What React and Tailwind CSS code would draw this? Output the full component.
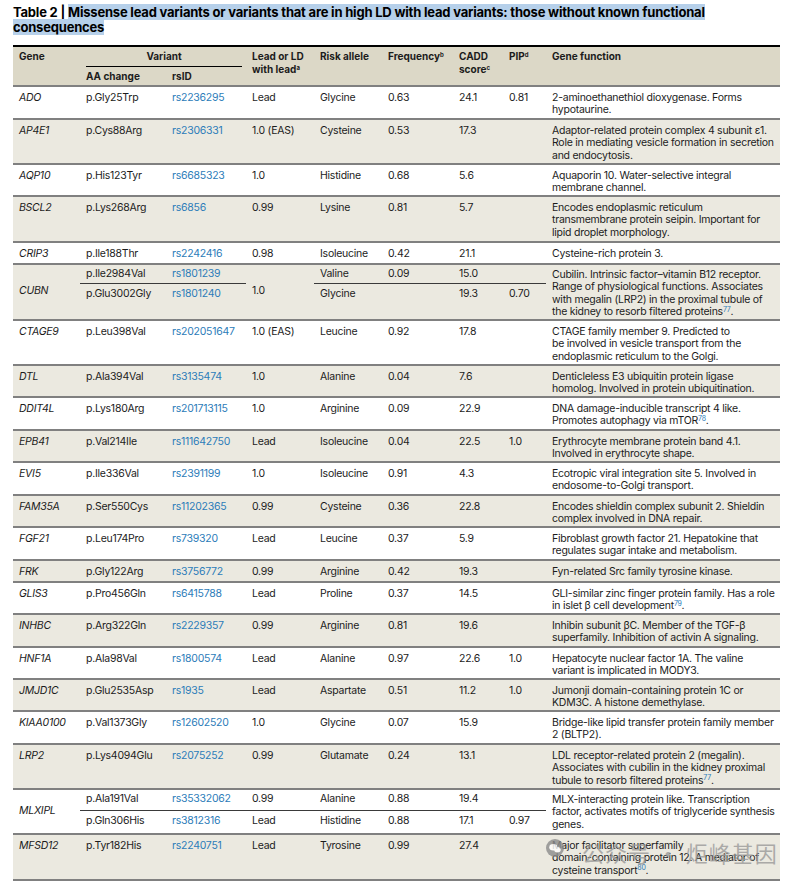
import React from "react";

const rsCls = "text-[#2c7cb9]";

const rows = [
  { gene: "ADO", aa: "p.Gly25Trp", rs: "rs2236295", lead: "Lead", allele: "Glycine", freq: "0.63", cadd: "24.1", pip: "0.81", fn: ["2-aminoethanethiol dioxygenase. Forms", "hypotaurine."], h: "h-[33px]" },
  { gene: "AP4E1", aa: "p.Cys88Arg", rs: "rs2306331", lead: "1.0 (EAS)", allele: "Cysteine", freq: "0.53", cadd: "17.3", pip: "", fn: ["Adaptor-related protein complex 4 subunit ε1.", "Role in mediating vesicle formation in secretion", "and endocytosis."], h: "h-[45px]" },
  { gene: "AQP10", aa: "p.His123Tyr", rs: "rs6685323", lead: "1.0", allele: "Histidine", freq: "0.68", cadd: "5.6", pip: "", fn: ["Aquaporin 10. Water-selective integral", "membrane channel."], h: "h-[31px]" },
  { gene: "BSCL2", aa: "p.Lys268Arg", rs: "rs6856", lead: "0.99", allele: "Lysine", freq: "0.81", cadd: "5.7", pip: "", fn: ["Encodes endoplasmic reticulum", "transmembrane protein seipin. Important for", "lipid droplet morphology."], h: "h-[46px]" },
  { gene: "CRIP3", aa: "p.Ile188Thr", rs: "rs2242416", lead: "0.98", allele: "Isoleucine", freq: "0.42", cadd: "21.1", pip: "", fn: ["Cysteine-rich protein 3."], h: "h-[22px]" },
  {
    gene: "CUBN",
    lead: "1.0",
    sharedLead: true,
    fn: ["Cubilin. Intrinsic factor–vitamin B12 receptor.", "Range of physiological functions. Associates", "with megalin (LRP2) in the proximal tubule of", ["the kidney to resorb filtered proteins", "77", "."]],
    sub: [
      { aa: "p.Ile2984Val", rs: "rs1801239", allele: "Valine", freq: "0.09", cadd: "15.0", pip: "", h: "h-[19px]" },
      { aa: "p.Glu3002Gly", rs: "rs1801240", allele: "Glycine", freq: "", cadd: "19.3", pip: "0.70", h: "h-[36px]" },
    ],
  },
  { gene: "CTAGE9", aa: "p.Leu398Val", rs: "rs202051647", lead: "1.0 (EAS)", allele: "Leucine", freq: "0.92", cadd: "17.8", pip: "", fn: ["CTAGE family member 9. Predicted to", "be involved in vesicle transport from the", "endoplasmic reticulum to the Golgi."], h: "h-[45px]" },
  { gene: "DTL", aa: "p.Ala394Val", rs: "rs3135474", lead: "1.0", allele: "Alanine", freq: "0.04", cadd: "7.6", pip: "", fn: ["Denticleless E3 ubiquitin protein ligase", "homolog. Involved in protein ubiquitination."], h: "h-[32px]" },
  { gene: "DDIT4L", aa: "p.Lys180Arg", rs: "rs201713115", lead: "1.0", allele: "Arginine", freq: "0.09", cadd: "22.9", pip: "", fn: ["DNA damage-inducible transcript 4 like.", ["Promotes autophagy via mTOR", "78", "."]], h: "h-[33px]" },
  { gene: "EPB41", aa: "p.Val214Ile", rs: "rs111642750", lead: "Lead", allele: "Isoleucine", freq: "0.04", cadd: "22.5", pip: "1.0", fn: ["Erythrocyte membrane protein band 4.1.", "Involved in erythrocyte shape."], h: "h-[32px]" },
  { gene: "EVI5", aa: "p.Ile336Val", rs: "rs2391199", lead: "1.0", allele: "Isoleucine", freq: "0.91", cadd: "4.3", pip: "", fn: ["Ecotropic viral integration site 5. Involved in", "endosome-to-Golgi transport."], h: "h-[33px]" },
  { gene: "FAM35A", aa: "p.Ser550Cys", rs: "rs11202365", lead: "0.99", allele: "Cysteine", freq: "0.36", cadd: "22.8", pip: "", fn: ["Encodes shieldin complex subunit 2. Shieldin", "complex involved in DNA repair."], h: "h-[32px]" },
  { gene: "FGF21", aa: "p.Leu174Pro", rs: "rs739320", lead: "Lead", allele: "Leucine", freq: "0.37", cadd: "5.9", pip: "", fn: ["Fibroblast growth factor 21. Hepatokine that", "regulates sugar intake and metabolism."], h: "h-[33px]" },
  { gene: "FRK", aa: "p.Gly122Arg", rs: "rs3756772", lead: "0.99", allele: "Arginine", freq: "0.42", cadd: "19.3", pip: "", fn: ["Fyn-related Src family tyrosine kinase."], h: "h-[22px]" },
  { gene: "GLIS3", aa: "p.Pro456Gln", rs: "rs6415788", lead: "Lead", allele: "Proline", freq: "0.37", cadd: "14.5", pip: "", fn: ["GLI-similar zinc finger protein family. Has a role", ["in islet β cell development", "79", "."]], h: "h-[32px]" },
  { gene: "INHBC", aa: "p.Arg322Gln", rs: "rs2229357", lead: "0.99", allele: "Arginine", freq: "0.81", cadd: "19.6", pip: "", fn: ["Inhibin subunit βC. Member of the TGF-β", "superfamily. Inhibition of activin A signaling."], h: "h-[33px]" },
  { gene: "HNF1A", aa: "p.Ala98Val", rs: "rs1800574", lead: "Lead", allele: "Alanine", freq: "0.97", cadd: "22.6", pip: "1.0", fn: ["Hepatocyte nuclear factor 1A. The valine", "variant is implicated in MODY3."], h: "h-[32px]" },
  { gene: "JMJD1C", aa: "p.Glu2535Asp", rs: "rs1935", lead: "Lead", allele: "Aspartate", freq: "0.51", cadd: "11.2", pip: "1.0", fn: ["Jumonji domain-containing protein 1C or", "KDM3C. A histone demethylase."], h: "h-[32px]" },
  { gene: "KIAA0100", aa: "p.Val1373Gly", rs: "rs12602520", lead: "1.0", allele: "Glycine", freq: "0.07", cadd: "15.9", pip: "", fn: ["Bridge-like lipid transfer protein family member", "2 (BLTP2)."], h: "h-[33px]" },
  { gene: "LRP2", aa: "p.Lys4094Glu", rs: "rs2075252", lead: "0.99", allele: "Glutamate", freq: "0.24", cadd: "13.1", pip: "", fn: ["LDL receptor-related protein 2 (megalin).", "Associates with cubilin in the kidney proximal", ["tubule to resorb filtered proteins", "77", "."]], h: "h-[45px]" },
  {
    gene: "MLXIPL",
    fn: ["MLX-interacting protein like. Transcription", "factor, activates motifs of triglyceride synthesis", "genes."],
    sub: [
      { aa: "p.Ala191Val", rs: "rs35332062", lead: "0.99", allele: "Alanine", freq: "0.88", cadd: "19.4", pip: "", h: "h-[21px]" },
      { aa: "p.Gln306His", rs: "rs3812316", lead: "Lead", allele: "Histidine", freq: "0.88", cadd: "17.1", pip: "0.97", h: "h-[24px]" },
    ],
  },
  { gene: "MFSD12", aa: "p.Tyr182His", rs: "rs2240751", lead: "Lead", allele: "Tyrosine", freq: "0.99", cadd: "27.4", pip: "", fn: ["Major facilitator superfamily", "domain-containing protein 12. A mediator of", ["cysteine transport", "80", "."]], h: "h-[46px]" },
];

const rowLine = "border-b-2 border-[#808080]";
const subLine = "border-b border-[#3a3a3a]";

function FnText({ lines }) {
  return lines.map((l, i) => (
    <React.Fragment key={i}>
      {Array.isArray(l) ? (
        <>
          {l[0]}
          <sup className={`text-[7px] ${rsCls}`}>{l[1]}</sup>
          {l[2]}
        </>
      ) : (
        l
      )}
      {i < lines.length - 1 && <br />}
    </React.Fragment>
  ));
}

function Cell({ children, className = "" }) {
  return <td className={`pl-[6px] pr-[3px] align-top whitespace-nowrap ${className}`}>{children}</td>;
}

function BodyRows() {
  const out = [];
  rows.forEach((r, idx) => {
    const bg = idx % 2 === 1 ? "bg-[#ebe9e0]" : "bg-white";
    if (!r.sub) {
      out.push(
        <tr key={r.gene} className={`${bg} ${r.h}`}>
          <Cell className={`pt-[5px] italic ${rowLine}`}>{r.gene}</Cell>
          <Cell className={`pt-[5px] ${rowLine}`}>{r.aa}</Cell>
          <Cell className={`pt-[5px] ${rsCls} ${rowLine}`}>{r.rs}</Cell>
          <Cell className={`pt-[5px] ${rowLine}`}>{r.lead}</Cell>
          <Cell className={`pt-[5px] ${rowLine}`}>{r.allele}</Cell>
          <Cell className={`pt-[5px] ${rowLine}`}>{r.freq}</Cell>
          <Cell className={`pt-[5px] ${rowLine}`}>{r.cadd}</Cell>
          <Cell className={`pt-[5px] ${rowLine}`}>{r.pip}</Cell>
          <Cell className={`pt-[5px] ${rowLine}`}>
            <FnText lines={r.fn} />
          </Cell>
        </tr>
      );
      return;
    }
    const [a, b] = r.sub;
    out.push(
      <tr key={r.gene + "1"} className={`${bg} ${a.h}`}>
        <td rowSpan={2} className={`pl-[6px] align-middle italic whitespace-nowrap ${rowLine}`}>
          {r.gene}
        </td>
        <Cell className={`pt-[3px] ${subLine}`}>{a.aa}</Cell>
        <Cell className={`pt-[3px] ${rsCls} ${subLine}`}>{a.rs}</Cell>
        {r.sharedLead ? (
          <td rowSpan={2} className={`pl-[6px] align-middle ${rowLine}`}>
            {r.lead}
          </td>
        ) : (
          <Cell className={`pt-[3px] ${subLine}`}>{a.lead}</Cell>
        )}
        <Cell className={`pt-[3px] ${subLine}`}>{a.allele}</Cell>
        <Cell className={`pt-[3px] ${subLine}`}>{a.freq}</Cell>
        <Cell className={`pt-[3px] ${subLine}`}>{a.cadd}</Cell>
        <Cell className={`pt-[3px] ${subLine}`}>{a.pip}</Cell>
        <td rowSpan={2} className={`pl-[6px] pr-[3px] pt-[4px] align-top whitespace-nowrap ${rowLine}`}>
          <FnText lines={r.fn} />
        </td>
      </tr>
    );
    out.push(
      <tr key={r.gene + "2"} className={`${bg} ${b.h}`}>
        <Cell className={`pt-[4px] ${rowLine}`}>{b.aa}</Cell>
        <Cell className={`pt-[4px] ${rsCls} ${rowLine}`}>{b.rs}</Cell>
        {!r.sharedLead && <Cell className={`pt-[4px] ${rowLine}`}>{b.lead}</Cell>}
        <Cell className={`pt-[4px] ${rowLine}`}>{b.allele}</Cell>
        <Cell className={`pt-[4px] ${rowLine}`}>{b.freq}</Cell>
        <Cell className={`pt-[4px] ${rowLine}`}>{b.cadd}</Cell>
        <Cell className={`pt-[4px] ${rowLine}`}>{b.pip}</Cell>
      </tr>
    );
  });
  return out;
}

function Sup({ c }) {
  return <sup className="text-[6px]">{c}</sup>;
}

export default function App() {
  const th = "pl-[6px] pr-[3px] pt-[3px] align-top text-left font-bold whitespace-nowrap";
  return (
    <div className="relative bg-white w-[792px] h-[882px] overflow-hidden text-[#1c1c1c]" style={{ fontFamily: "Inter, 'Noto Sans', sans-serif" }}>
      <div className="pl-[13px] pt-[5px] text-[13px] leading-[15px] font-bold tracking-[-0.2px] text-black">
        Table 2 | <span className="bg-[#b6d0ea]">Missense lead variants or variants that are in high LD with lead variants: those without known functional</span>
        <br />
        <span className="bg-[#b6d0ea]">consequences</span>
      </div>
      <table className="ml-[13px] mt-[10px] w-[767px] table-fixed border-separate border-spacing-0 text-[10.5px] leading-[12.5px] tracking-[-0.25px]">
        <colgroup>
          <col className="w-[67px]" />
          <col className="w-[86px]" />
          <col className="w-[80px]" />
          <col className="w-[68px]" />
          <col className="w-[68px]" />
          <col className="w-[71px]" />
          <col className="w-[50px]" />
          <col className="w-[43px]" />
          <col className="w-[234px]" />
        </colgroup>
        <thead className="bg-[#dcd8c7] text-[10px] tracking-normal">
          <tr className="h-[21px]">
            <th rowSpan={2} className={`${th} border-t-2 border-t-black ${rowLine}`}>Gene</th>
            <th colSpan={2} className="pl-[6px] pr-[4px] pt-[3px] align-top font-bold border-t-2 border-t-black">
              <div className="text-center border-b border-black pb-[3px]">Variant</div>
            </th>
            <th rowSpan={2} className={`${th} border-t-2 border-t-black ${rowLine}`}>
              Lead or LD
              <br />
              with lead<Sup c="a" />
            </th>
            <th rowSpan={2} className={`${th} border-t-2 border-t-black ${rowLine}`}>Risk allele</th>
            <th rowSpan={2} className={`${th} border-t-2 border-t-black ${rowLine}`}>
              Frequency<Sup c="b" />
            </th>
            <th rowSpan={2} className={`${th} border-t-2 border-t-black ${rowLine}`}>
              CADD
              <br />
              score<Sup c="c" />
            </th>
            <th rowSpan={2} className={`${th} border-t-2 border-t-black ${rowLine}`}>
              PIP<Sup c="d" />
            </th>
            <th rowSpan={2} className={`${th} border-t-2 border-t-black ${rowLine}`}>Gene function</th>
          </tr>
          <tr className="h-[20px]">
            <th className={`${th} ${rowLine}`}>AA change</th>
            <th className={`${th} ${rowLine}`}>rsID</th>
          </tr>
        </thead>
        <tbody>
          <BodyRows />
        </tbody>
      </table>

      <div className="absolute left-[546px] top-[838px] flex items-center whitespace-nowrap opacity-80 pointer-events-none">
        <svg width="18" height="18" viewBox="0 0 22 22" className="mr-[18px] -mt-[8px] shrink-0">
          <circle cx="11" cy="11" r="11" fill="#8c8c8c" />
          <ellipse cx="9" cy="10" rx="5" ry="4" fill="#fff" />
          <ellipse cx="14" cy="13" rx="4" ry="3.2" fill="#fff" />
        </svg>
        <span className="text-[22px] leading-[28px] tracking-[1px] text-[#9a9a9a]" style={{ fontFamily: "'Noto Sans CJK SC', sans-serif" }}>
          公众号 · 炬峰基因
        </span>
      </div>
    </div>
  );
}
